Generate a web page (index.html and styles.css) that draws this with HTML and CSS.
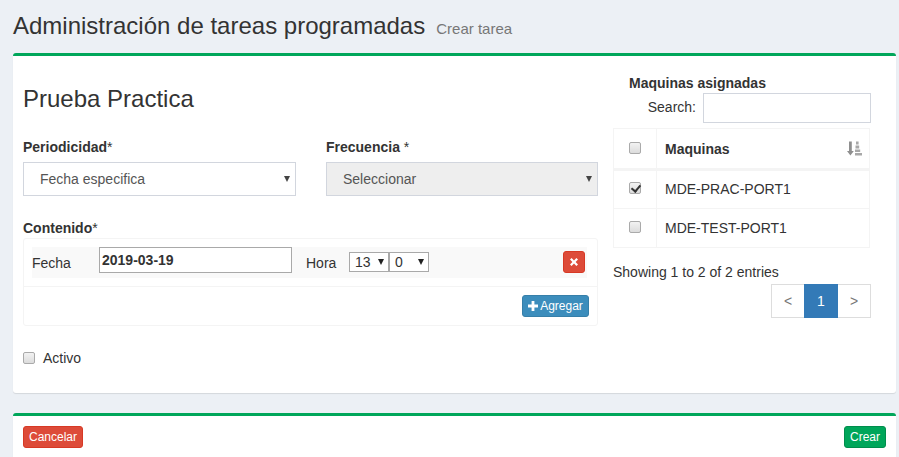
FILE: index.html
```html
<!DOCTYPE html>
<html lang="es">
<head>
<meta charset="utf-8">
<title>Administración de tareas programadas</title>
<link rel="stylesheet" href="styles.css">
</head>
<body>
<header class="page-head">
  <h1>Administración de tareas programadas</h1>
  <small>Crear tarea</small>
</header>
<section class="box main-box">
  <div class="left">
    <h2>Prueba Practica</h2>
    <div class="field-row">
      <div class="field">
        <label class="lbl">Periodicidad<span class="req">*</span></label>
        <div class="sel-wrap"><select class="ctl"><option>Fecha especifica</option></select></div>
      </div>
      <div class="field">
        <label class="lbl">Frecuencia <span class="req">*</span></label>
        <div class="sel-wrap"><select class="ctl" disabled><option>Seleccionar</option></select></div>
      </div>
    </div>
    <label class="lbl content-lbl">Contenido<span class="req">*</span></label>
    <div class="panel">
      <div class="panel-body">
        <div class="entry">
          <span class="entry-lbl">Fecha</span>
          <input class="date" type="text" value="2019-03-19">
          <span class="hora-lbl">Hora</span>
          <div class="mini-wrap"><select class="mini"><option>13</option></select></div>
          <div class="mini-wrap"><select class="mini"><option>0</option></select></div>
          <button class="btn-x" type="button" aria-label="Eliminar">
            <svg width="10" height="10" viewBox="0 0 10 10"><path d="M2.6 1 L5 3.4 L7.4 1 L9 2.6 L6.6 5 L9 7.4 L7.4 9 L5 6.6 L2.6 9 L1 7.4 L3.4 5 L1 2.6 Z" fill="#fff"/></svg>
          </button>
        </div>
      </div>
      <div class="panel-foot">
        <button class="btn btn-blue" type="button">
          <svg width="10" height="10" viewBox="0 0 10 10"><path d="M3.6 0 H6.4 V3.6 H10 V6.4 H6.4 V10 H3.6 V6.4 H0 V3.6 H3.6 Z" fill="#fff"/></svg>
          Agregar
        </button>
      </div>
    </div>
    <label class="activo"><input class="chk" type="checkbox"><span>Activo</span></label>
  </div>
  <div class="right">
    <div class="right-title">Maquinas asignadas</div>
    <div class="search"><span class="search-lbl">Search:</span><input type="text" class="search-input"></div>
    <table class="tbl">
      <thead>
        <tr>
          <th class="c1"><input class="chk" type="checkbox"></th>
          <th class="c2">
            <div class="th-inner">Maquinas
              <svg class="sort" width="15" height="15" viewBox="0 0 15 15"><path d="M2 0.5 H4.8 V10 H6.8 L3.4 14.5 L0 10 H2 Z" fill="#8f8f8f"/><path d="M9 0.5 H11.6 V3.4 H9 Z M8.5 4.6 H12.2 V7.4 H8.5 Z M8 8.4 H13.2 V11 H8 Z M8 12 H15 V14.5 H8 Z" fill="#a8a8a8"/></svg>
            </div>
          </th>
        </tr>
      </thead>
      <tbody>
        <tr class="first"><td class="c1"><input class="chk" type="checkbox" checked></td><td>MDE-PRAC-PORT1</td></tr>
        <tr><td class="c1"><input class="chk" type="checkbox"></td><td>MDE-TEST-PORT1</td></tr>
      </tbody>
    </table>
    <div class="info">Showing 1 to 2 of 2 entries</div>
    <nav class="pager">
      <span class="pg">&lt;</span><span class="pg active">1</span><span class="pg">&gt;</span>
    </nav>
  </div>
</section>
<section class="box foot-box">
  <button class="btn btn-red" type="button">Cancelar</button>
  <button class="btn btn-green" type="button">Crear</button>
</section>
</body>
</html>
```
FILE: styles.css
```css
* { box-sizing: border-box; }
html, body { height: 457px; overflow: hidden; }
body {
  margin: 0;
  background: #ecf0f5;
  font-family: "Liberation Sans", Arial, sans-serif;
  font-size: 14px;
  color: #333;
  line-height: 20px;
}
.page-head {
  display: flex;
  align-items: baseline;
  padding: 11px 13px 0;
  height: 53px;
}
h1 { margin: 0; font-size: 24px; line-height: 29px; font-weight: 400; }
small { margin-left: 11px; font-size: 15px; color: #777; }
.box {
  margin-left: 13px;
  width: 883px;
  background: #fff;
  border-top: 3px solid #00a65a;
  border-radius: 3px;
  box-shadow: 0 1px 1px rgba(0,0,0,.1);
}
.main-box { display: flex; height: 340px; padding-left: 10px; gap: 15px; }
.left { width: 575px; }
.right { width: 258px; padding-top: 17px; }
h2 { margin: 0; padding-top: 28px; font-size: 24px; line-height: 29px; font-weight: 400; }
.field-row { display: flex; gap: 30px; margin-top: 24px; }
.field:first-child { flex: 0 0 273px; }
.field:last-child { flex: 0 0 272px; }
.lbl { display: block; font-size: 14px; font-weight: 700; line-height: 20px; }
.req { font-weight: 400; }
.field .lbl { margin-bottom: 5px; }
.sel-wrap, .mini-wrap { position: relative; }
.sel-wrap::after, .mini-wrap::after {
  content: "";
  position: absolute;
  pointer-events: none;
  border-left: 3.5px solid transparent;
  border-right: 3.5px solid transparent;
  border-top: 6px solid #444;
}
.sel-wrap::after { right: 6px; top: 14px; }
.mini-wrap::after { right: 5px; top: 7px; border-top-color: #222; }
.ctl {
  appearance: none;
  display: block;
  width: 100%;
  height: 34px;
  padding: 0 0 0 16px;
  border: 1px solid #d2d6de;
  border-radius: 0;
  background: #fff;
  color: #555;
  font: 14px "Liberation Sans", Arial, sans-serif;
  opacity: 1;
}
.ctl:disabled { background: #eee; color: #555; }
.content-lbl { margin-top: 22px; height: 20px; line-height: 20px; }
.panel {
  height: 88px;
  border: 1px solid #f4f4f4;
  border-radius: 3px;
}
.panel-body { height: 48px; padding: 8px 10px 0 8px; border-bottom: 1px solid #f4f4f4; }
.entry {
  display: flex;
  align-items: center;
  height: 31px;
  background: #f9f9f9;
  padding-right: 2px;
}
.entry-lbl { width: 67px; }
.date {
  width: 193px;
  height: 26px;
  margin-top: -5px;
  padding: 0 2px;
  border: 1px solid #a9a9a9;
  background: #fff;
  color: #333;
  font: 700 14px "Liberation Sans", Arial, sans-serif;
  outline: 0;
}
.hora-lbl { margin-left: 14px; width: 43px; }
.mini-wrap { margin-top: -1px; }
.mini {
  appearance: none;
  display: block;
  width: 40px;
  height: 20px;
  padding: 0 0 0 5px;
  border: 1px solid #a9a9a9;
  border-radius: 0;
  background: #fff;
  color: #333;
  font: 14px "Liberation Sans", Arial, sans-serif;
}
.btn-x {
  margin: -1px 0 0 auto;
  display: flex;
  align-items: center;
  justify-content: center;
  width: 22px;
  height: 22px;
  padding: 0;
  border: 1px solid #d73925;
  border-radius: 3px;
  background: #dd4b39;
}
.panel-foot { display: flex; justify-content: flex-end; padding: 8px 8px 0 0; }
.btn {
  display: inline-flex;
  align-items: center;
  justify-content: center;
  height: 22px;
  padding: 0;
  border-radius: 3px;
  color: #fff;
  font: 12px/18px "Liberation Sans", Arial, sans-serif;
}
.btn-blue { width: 67px; gap: 2px; background: #3c8dbc; border: 1px solid #367fa9; }
.btn-red { width: 60px; background: #dd4b39; border: 1px solid #d73925; }
.btn-green { width: 42px; background: #00a65a; border: 1px solid #008d4c; }
.chk {
  appearance: none;
  display: block;
  position: relative;
  width: 12px;
  height: 12px;
  margin: 0;
  border: 1px solid #aaa;
  border-radius: 2px;
  background: linear-gradient(#f2f2f2, #dcdcdc);
}
.chk:checked::after {
  content: "";
  position: absolute;
  left: 3px;
  top: 0;
  width: 4px;
  height: 7px;
  border: solid #333;
  border-width: 0 2px 2px 0;
  transform: rotate(40deg);
}
.activo { display: flex; align-items: center; gap: 8px; margin-top: 22px; height: 20px; }
.right-title { margin-left: 16px; font-weight: 700; font-size: 14px; line-height: 20px; height: 20px; }
.search { display: flex; align-items: center; justify-content: flex-end; gap: 7px; height: 30px; }
.search-lbl { margin-top: -2px; }
.search-input { width: 168px; height: 30px; border: 1px solid #d2d6de; background: #fff; outline: 0; }
.tbl {
  display: table;
  width: 257px;
  margin-top: 5px;
  border-collapse: collapse;
  table-layout: fixed;
  font-size: 14px;
}
.tbl th, .tbl td { border: 1px solid #f4f4f4; padding: 0 8px; text-align: left; }
.tbl th { height: 41px; border-bottom: 3px solid #f4f4f4; font-weight: 700; }
.tbl td { height: 39px; }
.tbl .first td { padding-bottom: 2px; }
.c1 { width: 43px; }
.tbl .c1 { padding: 0 0 0 15px; }
.tbl .c1 .chk { top: -1px; }
.th-inner { display: flex; justify-content: space-between; align-items: center; }
.sort { margin-right: -1px; }
.info { margin-top: 14px; height: 20px; }
.pager { display: flex; justify-content: flex-end; margin-top: 2px; }
.pg {
  display: flex;
  align-items: center;
  justify-content: center;
  width: 33px;
  height: 34px;
  border: 1px solid #ddd;
  border-left-width: 0;
  border-right-width: 0;
  color: #777;
  background: #fff;
}
.pg:first-child { border-left-width: 1px; }
.pg:last-child { border-right-width: 1px; }
.pg.active { width: 34px; background: #337ab7; border-color: #337ab7; color: #fff; }
.foot-box {
  display: flex;
  justify-content: space-between;
  align-items: flex-start;
  margin-top: 20px;
  height: 60px;
  padding: 10px 10px 0;
}
```
